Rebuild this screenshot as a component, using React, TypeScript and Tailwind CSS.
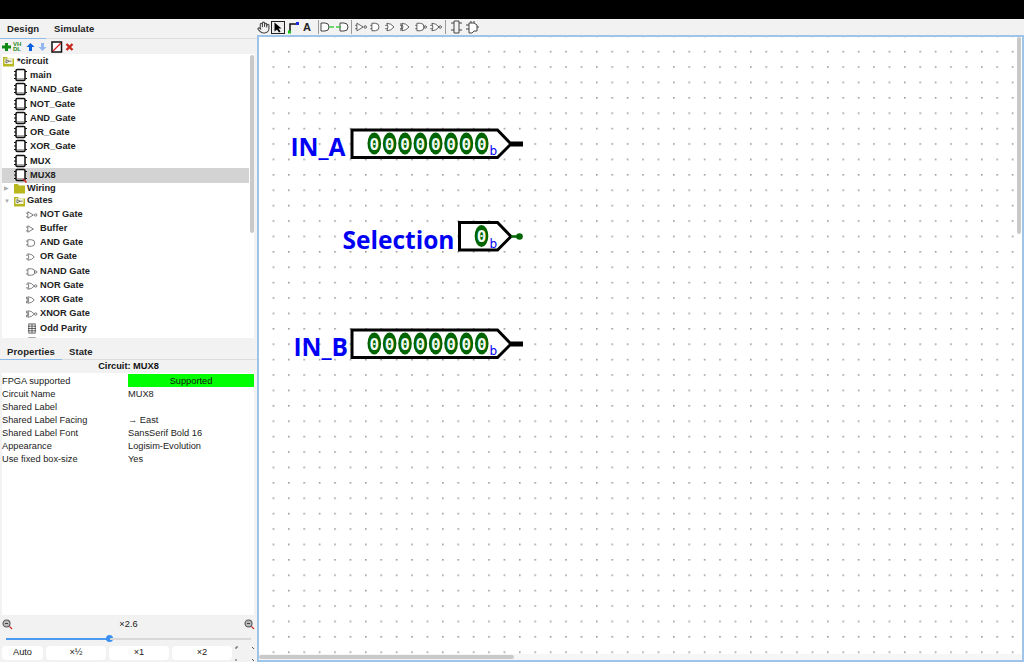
import { Hand } from "lucide-react";

type GateKind = "not" | "buffer" | "and" | "or" | "nand" | "nor" | "xor" | "xnor" | "parity";

function Gate({ kind }: { kind: GateKind }) {
  const bubble = kind === "not" || kind === "nand" || kind === "nor" || kind === "xnor";
  let body = "M2 1.5 L6 1.5 A3.5 3.5 0 0 1 6 8.5 L2 8.5 Z";
  if (kind === "not" || kind === "buffer") body = "M2 1.5 L8 5 L2 8.5 Z";
  if (kind === "or" || kind === "nor" || kind === "xor" || kind === "xnor")
    body = "M2 1.5 Q6 1.5 9 5 Q6 8.5 2 8.5 Q4 5 2 1.5 Z";
  if (kind === "parity") {
    return (
      <svg width="10" height="11" viewBox="0 0 11 12" fill="none" stroke="#555" strokeWidth="1">
        <rect x="2" y="1" width="7" height="10" />
        <path d="M1 3.5H10M1 6H10M1 8.5H10M5.5 1V11" />
      </svg>
    );
  }
  return (
    <svg width="13" height="10" viewBox="0 0 13 10" fill="none" stroke="#666" strokeWidth="0.9">
      <path d="M0 3H2M0 7H2" />
      <path d={body} fill="#fff" />
      {(kind === "xor" || kind === "xnor") && <path d="M0.5 1.5 Q2.5 5 0.5 8.5" />}
      {bubble && <circle cx="10.5" cy="5" r="1.3" />}
    </svg>
  );
}

function Chip({ search }: { search?: boolean }) {
  return (
    <svg width="13" height="15" viewBox="0 0 13 15" fill="none">
      <rect x="2" y="1.5" width="9" height="11" rx="1.2" fill="#fff" stroke="#111" strokeWidth="1.5" />
      <path d="M0 3.5H2M0 7H2M0 10.5H2M11 3.5H13M11 10.5H13" stroke="#111" strokeWidth="1" />
      <path d="M3 11H10" stroke="#888" strokeWidth="1.4" />
      {search && <path d="M9 11L12.5 14.5" stroke="#c22" strokeWidth="1.4" />}
    </svg>
  );
}

function Folder({ open }: { open?: boolean }) {
  return (
    <svg width="11" height="11" viewBox="0 0 11 11">
      <path d="M0 1H4L5 2.5H11V10.5H0Z" fill="#b8b81e" />
      {open && <path d="M1.5 2.5H9.5V8H1.5Z" fill="#f4f4dc" />}
      {open && <path d="M3 3.5L6 5.2L3 7Z M6 5.2H8.5" stroke="#444" strokeWidth="0.7" fill="none" />}
    </svg>
  );
}

const circuits = ["main", "NAND_Gate", "NOT_Gate", "AND_Gate", "OR_Gate", "XOR_Gate", "MUX"];

const gates: { name: string; kind: GateKind }[] = [
  { name: "NOT Gate", kind: "not" },
  { name: "Buffer", kind: "buffer" },
  { name: "AND Gate", kind: "and" },
  { name: "OR Gate", kind: "or" },
  { name: "NAND Gate", kind: "nand" },
  { name: "NOR Gate", kind: "nor" },
  { name: "XOR Gate", kind: "xor" },
  { name: "XNOR Gate", kind: "xnor" },
  { name: "Odd Parity", kind: "parity" },
  { name: "Even Parity", kind: "parity" },
];

const props = [
  ["Circuit Name", "MUX8"],
  ["Shared Label", ""],
  ["Shared Label Facing", "→ East"],
  ["Shared Label Font", "SansSerif Bold 16"],
  ["Appearance", "Logisim-Evolution"],
  ["Use fixed box-size", "Yes"],
];

function Tree() {
  return (
    <div className="relative ml-[2px] mr-[3px] h-[284px] overflow-hidden bg-white pt-[0.5px] text-[9.25px] font-bold text-[#222]">
      <div className="flex h-[14px] items-center gap-[2px] pl-[1px]">
        <Folder open />
        <span className="ml-[1px] pt-[1px]">*circuit</span>
      </div>
      {circuits.map((name) => (
        <div key={name} className="flex h-[14.25px] items-center gap-[2px] pl-[12px]">
          <Chip />
          <span className="ml-[1px] pt-[1px]">{name}</span>
        </div>
      ))}
      <div className="mr-[4px] flex h-[14.25px] items-center gap-[2px] bg-[#d3d3d3] pl-[12px]">
        <Chip search />
        <span className="ml-[1px] pt-[1px]">MUX8</span>
      </div>
      <div className="flex h-[12.5px] items-center pl-[2px]">
        <span className="w-[10px] text-[6px] font-normal text-[#aaa]">▶</span>
        <Folder />
        <span className="ml-[2px]">Wiring</span>
      </div>
      <div className="flex h-[12.5px] items-center pl-[2px]">
        <span className="w-[10px] text-[6px] font-normal text-[#aaa]">▼</span>
        <Folder open />
        <span className="ml-[2px]">Gates</span>
      </div>
      {gates.map((g) => (
        <div key={g.name} className="flex h-[14.25px] items-center gap-[2px] pl-[24px]">
          <span className="flex w-[12px] justify-center">
            <Gate kind={g.kind} />
          </span>
          <span>{g.name}</span>
        </div>
      ))}
      <div className="absolute right-0 top-0 flex h-full w-[5px] justify-center bg-white">
        <div className="mt-[1px] h-[178px] w-[4px] rounded-sm bg-[#c9c9c9]" />
      </div>
    </div>
  );
}

function ProjectToolbar() {
  return (
    <div className="flex h-[15px] items-center gap-[1px] pl-[1px]">
      <svg width="11" height="12" viewBox="0 0 11 12">
        <path d="M4 2H7V4.5H10V7.5H7V10H4V7.5H1V4.5H4Z" fill="#0c8a12" />
      </svg>
      <span className="w-[11px] text-[6px] font-bold leading-[5px] text-[#2a8a1a]">
        VH
        <br />
        DL
      </span>
      <svg width="11" height="12" viewBox="0 0 11 12">
        <path d="M5.5 2L9.5 6H7V10H4V6H1.5Z" fill="#0a5fe0" />
      </svg>
      <svg width="11" height="12" viewBox="0 0 11 12">
        <path d="M5.5 10L9.5 6H7V2H4V6H1.5Z" fill="#93b7ee" />
      </svg>
      <svg className="ml-[2px]" width="12" height="12" viewBox="0 0 12 12" fill="none">
        <rect x="1" y="1" width="9.5" height="10" fill="#fff" stroke="#111" strokeWidth="1.5" />
        <path d="M2 10L10 2" stroke="#d22" strokeWidth="1.2" />
      </svg>
      <svg width="11" height="12" viewBox="0 0 11 12">
        <path d="M2.5 3L8.5 9M8.5 3L2.5 9" stroke="#c8281e" strokeWidth="2.4" />
      </svg>
    </div>
  );
}

function Magnifier() {
  return (
    <svg width="11" height="11" viewBox="0 0 11 11" fill="none">
      <circle cx="4.5" cy="4.5" r="3.5" fill="#b9b9b9" stroke="#555" strokeWidth="1.1" />
      <path d="M3 4.5H6" stroke="#444" />
      <path d="M7.5 7.5L10 10" stroke="#c33" strokeWidth="1.2" />
    </svg>
  );
}

function Sidebar() {
  return (
    <aside className="flex w-[257px] shrink-0 flex-col bg-[#f2f2f2] font-['Liberation_Sans',sans-serif]">
      <div className="flex h-[20px] items-center border-b border-[#ddd] pl-[7px] pt-[2px] text-[9.5px] font-bold tracking-[0.1px] text-[#222]">
        <span className="w-[47px]">Design</span>
        <span>Simulate</span>
      </div>
      <div className="-mt-[1px] h-[1px] w-[46px] bg-[#8fbbe8]" />
      <ProjectToolbar />
      <Tree />
      <div className="mt-[4px] flex h-[18px] items-center border-b border-[#ddd] pl-[7px] pt-[3px] text-[9.5px] font-bold tracking-[0.1px] text-[#222]">
        <span className="w-[62px]">Properties</span>
        <span>State</span>
      </div>
      <div className="-mt-[1px] h-[1px] w-[62px] bg-[#8fbbe8]" />
      <div className="flex h-[13px] items-center justify-center text-[9.25px] font-bold text-[#111]">Circuit: MUX8</div>
      <div className="ml-[2px] mr-[3px] h-[242px] bg-white text-[9.25px] text-[#222]">
        <div className="grid h-[13px] grid-cols-[126px_1fr] items-center">
          <span className="pt-[2px]">FPGA supported</span>
          <span className="flex h-[13px] items-center justify-center bg-[#00ff00] pt-[2px] text-[#111]">Supported</span>
        </div>
        {props.map(([k, v]) => (
          <div key={k} className="grid h-[13px] grid-cols-[126px_1fr] items-center pt-[2px]">
            <span>{k}</span>
            <span>{v}</span>
          </div>
        ))}
      </div>
      <div className="flex h-[18px] items-center justify-between px-[2px] text-[9.25px] text-[#222]">
        <Magnifier />
        <span className="pt-[2px]">×2.6</span>
        <Magnifier />
      </div>
      <div className="mx-[6px] flex h-[11px] items-center">
        <div className="h-[2px] w-[103px] bg-[#4a9bf0]" />
        <div className="-mx-[3px] h-[7px] w-[7px] shrink-0 rounded-full bg-[#3b8ff0]" />
        <div className="h-[2px] flex-1 bg-[#d8d8d8]" />
      </div>
      <div className="mt-[2px] flex h-[14px] items-center gap-[3px] pl-[2px] text-[9.25px] text-[#222]">
        <span className="flex h-[14px] w-[41px] items-center justify-center rounded-sm bg-white">Auto</span>
        <span className="flex h-[14px] w-[60px] items-center justify-center rounded-sm bg-white">×½</span>
        <span className="flex h-[14px] w-[60px] items-center justify-center rounded-sm bg-white">×1</span>
        <span className="flex h-[14px] w-[60px] items-center justify-center rounded-sm bg-white">×2</span>
        <svg width="20" height="15" viewBox="0 0 20 15" fill="none" stroke="#555" strokeWidth="1">
          <path d="M1 3V1H3M17 1L19 3M1 13V15M17 13L19 15" />
        </svg>
      </div>
    </aside>
  );
}

function ToolGate({ d, stub, bubble }: { d: string; stub?: string; bubble?: boolean }) {
  return (
    <svg width="15" height="10" viewBox="0 0 15 12" fill="none" stroke="#444" strokeWidth="1">
      <path d="M0 4H2M0 8H2" />
      <path d={d} fill="#fff" />
      {stub && <path d={stub} />}
      {bubble && <circle cx="12" cy="6" r="1.5" />}
    </svg>
  );
}

const AND_PATH = "M2 1.5H6A4.5 4.5 0 0 1 6 10.5H2Z";
const OR_PATH = "M2 1.5Q7 1.5 10.5 6Q7 10.5 2 10.5Q4.5 6 2 1.5Z";
const TRI_PATH = "M2 1.5L9.5 6L2 10.5Z";

function Toolbar() {
  return (
    <div className="flex h-[16px] items-center bg-[#f2f2f2] pl-[1px] text-[#222]">
      <Hand size={13} strokeWidth={2} className="ml-[-1px] text-[#444]" />
      <span className="ml-[1px] flex h-[13px] w-[14px] items-center justify-center border-[1.5px] border-[#222] bg-[#eee]">
        <svg width="10" height="11" viewBox="0 0 10 11">
          <path d="M1.5 0.5V9.5L4 7.5L6 10.5L7.5 9.5L5.5 6.5H8.5Z" fill="#000" />
        </svg>
      </span>
      <svg className="ml-[2px]" width="13" height="13" viewBox="0 0 13 13" fill="none">
        <path d="M3 11V3H10" stroke="#111" strokeWidth="1.5" />
        <rect x="1" y="9.5" width="3" height="3" fill="#19c419" />
        <rect x="9" y="1" width="3" height="3" fill="#1a2be0" />
      </svg>
      <span className="ml-[3px] w-[9px] text-[11px] font-bold leading-none font-['Liberation_Sans',sans-serif]">A</span>
      <span className="ml-[6px] h-[14px] w-[1px] bg-[#999]" />
      <span className="ml-[1px] flex">
        <svg width="15" height="12" viewBox="0 0 15 12" fill="none">
          <path d="M1 2H5A4 4 0 0 1 5 10H1Z" stroke="#444" fill="#fff" />
          <path d="M9 6H14" stroke="#19c419" strokeWidth="1.2" />
        </svg>
        <svg width="15" height="12" viewBox="0 0 15 12" fill="none">
          <path d="M5 2H9A4 4 0 0 1 9 10H5Z" stroke="#444" fill="#fff" />
          <path d="M1 6H6" stroke="#19c419" strokeWidth="1.2" />
        </svg>
      </span>
      <span className="ml-[1px] h-[14px] w-[1px] bg-[#999]" />
      <span className="ml-[2px] flex">
        <ToolGate d={TRI_PATH} bubble />
        <ToolGate d={AND_PATH} />
        <ToolGate d={OR_PATH} />
        <ToolGate d={OR_PATH} stub="M0.5 1.5Q3 6 0.5 10.5" />
        <ToolGate d={AND_PATH} bubble />
        <ToolGate d={OR_PATH} bubble />
      </span>
      <span className="ml-[1px] h-[14px] w-[1px] bg-[#999]" />
      <svg className="ml-[5px]" width="12" height="14" viewBox="0 0 12 14" fill="none" stroke="#444">
        <path d="M3 1V13M8 1V13M3 1H8M3 13H8M0 3H3M0 10H3M8 3H11M8 10H11" />
      </svg>
      <svg className="ml-[3px]" width="13" height="14" viewBox="0 0 13 14" fill="none" stroke="#444">
        <path d="M3 3H8L11 5V11H8L6 13H3Z" fill="#fff" />
        <path d="M0 5H3M0 9H3M11 7H13M5 1V3M8 1V3" />
      </svg>
    </div>
  );
}

function Pin({
  label,
  bits,
  labelX,
  top,
  boxX,
}: {
  label: string;
  bits: number;
  labelX: number;
  top: number;
  boxX: number;
}) {
  // drawn in canvas coords, the svg starts at x=0 of the canvas
  const wide = bits > 1;
  const y = top - 35;
  const x = (n: number) => n - 257;
  return (
    <g>
      <text
        x={x(labelX)}
        y={y + 26}
        fill="#0000f5"
        fontFamily="'Open Sans', sans-serif"
        fontWeight="700"
        fontSize="24.5"
      >
        {label}
      </text>
      <path
        d={`M${x(boxX)} ${y} H${x(497.5)} L${x(511)} ${y + 14} L${x(497.5)} ${y + 27.5} H${x(boxX)} Z`}
        fill="#fff"
        stroke="#000"
        strokeWidth="3"
      />
      {wide ? (
        <path d={`M${x(511)} ${y + 14} H${x(523)}`} stroke="#000" strokeWidth="5" />
      ) : (
        <>
          <path d={`M${x(511)} ${y + 14} H${x(520)}`} stroke="#006400" strokeWidth="2.5" />
          <circle cx={x(519.5)} cy={y + 14} r="3.3" fill="#006400" />
        </>
      )}
      {Array.from({ length: bits }, (_, i) => {
        const cx = x(wide ? 374.3 + i * 15.35 : 481.5);
        return (
          <g key={i}>
            <ellipse cx={cx} cy={y + 13.5} rx="6.8" ry="11" fill="#006400" />
            <text
              x={cx}
              y={y + 19.5}
              textAnchor="middle"
              fill="#f4fbf4"
              fontFamily="'DejaVu Sans Mono', monospace"
              fontWeight="700"
              fontSize="16"
            >
              0
            </text>
          </g>
        );
      })}
      <text
        x={x(489.5)}
        y={y + 25}
        fill="#0000f5"
        fontFamily="'DejaVu Sans', sans-serif"
        fontSize="12"
      >
        b
      </text>
    </g>
  );
}

function Canvas() {
  return (
    <div className="relative flex-1 overflow-hidden border-2 border-[#9fc4ea] bg-white">
      <svg className="absolute -left-[2px] -top-[2px]" width="767" height="627">
        <defs>
          <pattern id="dots" x="0.2" y="0.4" width="15.4" height="15.4" patternUnits="userSpaceOnUse">
            <rect width="1.6" height="1.6" fill="#9a9a9a" />
          </pattern>
        </defs>
        <rect width="767" height="627" fill="url(#dots)" />
        <Pin label="IN_A" bits={8} labelX={290.5} top={130} boxX={352} />
        <Pin label="Selection" bits={1} labelX={342.5} top={222.5} boxX={459.5} />
        <Pin label="IN_B" bits={8} labelX={293.5} top={330} boxX={352} />
      </svg>
      {/* scrollbars */}
      <div className="absolute right-0 top-0 flex h-full w-[6px] justify-center bg-white">
        <div className="h-[197px] w-[4px] rounded-sm bg-[#c9c9c9]" />
      </div>
      <div className="absolute bottom-0 left-0 flex h-[6px] w-full items-center bg-[#f6f6f6]">
        <div className="h-[4px] w-[255px] rounded-sm bg-[#c9c9c9]" />
      </div>
    </div>
  );
}

export default function App() {
  return (
    <div className="flex h-[662px] w-[1024px] flex-col overflow-hidden bg-[#f2f2f2]">
      <div className="h-[19px] shrink-0 bg-black" />
      <div className="flex min-h-0 flex-1">
        <Sidebar />
        <main className="flex min-w-0 flex-1 flex-col">
          <Toolbar />
          <Canvas />
        </main>
      </div>
    </div>
  );
}
